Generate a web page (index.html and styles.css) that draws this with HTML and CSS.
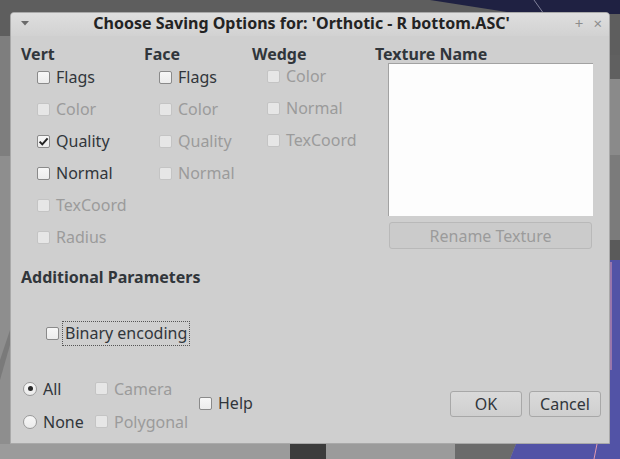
FILE: index.html
```html
<!DOCTYPE html>
<html lang="en">
<head>
    <meta charset="UTF-8">
    <meta name="viewport" content="width=device-width, initial-scale=1.0">
    <title>Choose Saving Options</title>
    <link rel="stylesheet" href="styles.css">
</head>
<body>
    <!-- desktop behind the dialog -->
    <svg class="desktop" width="620" height="459" viewBox="0 0 620 459">
        <rect x="0" y="0" width="620" height="459" fill="#8e8e8e"/>
        <polygon points="0,0 440,0 620,0 620,60 0,36" fill="#5e5e5e"/>
        <polygon points="430,0 620,0 620,14 520,14" fill="#1f2142"/>
        <line x1="534" y1="0" x2="544" y2="14" stroke="#9a9ab0" stroke-width="0.8"/>
        <rect x="0" y="36" width="10" height="120" fill="#7e7e7e"/>
        <polygon points="0,360 10,330 10,345 0,380" fill="#7a7a7a"/>
        <rect x="608" y="55" width="12" height="24" fill="#606060"/>
        <rect x="608" y="79" width="12" height="76" fill="#8a8a8a"/>
        <rect x="608" y="155" width="12" height="85" fill="#7b7b7b"/>
        <rect x="608" y="240" width="12" height="20" fill="#5a5a5a"/>
        <rect x="608" y="260" width="12" height="199" fill="#5253a6"/>
        <line x1="611" y1="262" x2="611" y2="370" stroke="#e29ab0" stroke-width="1"/>
        <rect x="0" y="444" width="620" height="15" fill="#9b9b9b"/>
        <rect x="290" y="444" width="36" height="15" fill="#3c3c3c"/>
        <polygon points="455,444 516,444 510,459 455,459" fill="#6b6b6b"/>
        <polygon points="516,444 620,444 620,459 510,459" fill="#5253a6"/>
        <line x1="597" y1="444" x2="594" y2="459" stroke="#e29ab0" stroke-width="1"/>
    </svg>

    <div class="dialog">
        <div class="titlebar">
            <svg class="menu-arrow" width="8" height="5" viewBox="0 0 8 5"><polygon points="0,0 8,0 4,4.5" fill="#6a6a6a"/></svg>
            <span class="title">Choose Saving Options for: 'Orthotic - R bottom.ASC'</span>
            <span class="win-btns"><span>+</span><span>×</span></span>
        </div>

        <div class="content">
            <div class="attrs">
                <div class="group vert">
                    <div class="group-title">Vert</div>
                    <div class="check"><span class="box"></span>Flags</div>
                    <div class="check disabled"><span class="box"></span>Color</div>
                    <div class="check"><span class="box checked"><svg width="11" height="11" viewBox="0 0 11 11"><path d="M1.6 5.6 L4.3 8.4 L9.6 2.4" fill="none" stroke="#222" stroke-width="2"/></svg></span>Quality</div>
                    <div class="check"><span class="box"></span>Normal</div>
                    <div class="check disabled"><span class="box"></span>TexCoord</div>
                    <div class="check disabled"><span class="box"></span>Radius</div>
                </div>
                <div class="group">
                    <div class="group-title">Face</div>
                    <div class="check"><span class="box"></span>Flags</div>
                    <div class="check disabled"><span class="box"></span>Color</div>
                    <div class="check disabled"><span class="box"></span>Quality</div>
                    <div class="check disabled"><span class="box"></span>Normal</div>
                </div>
                <div class="group wedge">
                    <div class="group-title">Wedge</div>
                    <div class="check disabled"><span class="box"></span>Color</div>
                    <div class="check disabled"><span class="box"></span>Normal</div>
                    <div class="check disabled"><span class="box"></span>TexCoord</div>
                </div>
                <div class="texture">
                    <div class="group-title">Texture Name</div>
                    <div class="texture-list"></div>
                    <button class="btn rename" disabled>Rename Texture</button>
                </div>
            </div>

            <div class="section-title">Additional Parameters</div>

            <div class="binary-row">
                <span class="box"></span>
                <span class="focus">Binary encoding</span>
            </div>

            <div class="bottom">
                <div class="col radios">
                    <div class="check"><span class="radio on"></span>All</div>
                    <div class="check"><span class="radio"></span>None</div>
                </div>
                <div class="col extras">
                    <div class="check disabled"><span class="box"></span>Camera</div>
                    <div class="check disabled"><span class="box"></span>Polygonal</div>
                </div>
                <div class="check help"><span class="box"></span>Help</div>
                <div class="buttons">
                    <button class="btn">OK</button>
                    <button class="btn">Cancel</button>
                </div>
            </div>
        </div>
    </div>
</body>
</html>
```

FILE: styles.css
```css
body {
    margin: 0;
    padding: 0;
    width: 620px;
    height: 459px;
    overflow: hidden;
    position: relative;
    font-family: 'Noto Sans', 'Open Sans', sans-serif;
    font-size: 16px;
    color: #31363b;
}
.desktop {
    position: absolute;
    top: 0;
    left: 0;
    z-index: 0;
}
.dialog {
    position: relative;
    z-index: 1;
    margin: 12px 0 0 10px;
    width: 600px;
    height: 432px;
    box-sizing: border-box;
    background-color: #cfcfcf;
    border: 1px solid #a9a9a9;
    border-radius: 4px 4px 0 0;
    display: flex;
    flex-direction: column;
}
.titlebar {
    height: 23px;
    box-sizing: border-box;
    padding-bottom: 3px;
    display: flex;
    align-items: center;
    position: relative;
    background: linear-gradient(#dedede, #d2d2d2);
    border-radius: 3px 3px 0 0;
}
.menu-arrow {
    position: absolute;
    left: 10px;
    top: 8px;
}
.title {
    flex: 1;
    text-align: center;
    font-weight: bold;
    font-size: 16px;
    line-height: 20px;
    color: #232323;
    padding-right: 17px;
}
.win-btns {
    position: absolute;
    right: 7px;
    top: 0;
    display: flex;
    gap: 10px;
    color: #8d8d8d;
    font-size: 15px;
    line-height: 20px;
}
.content {
    padding: 8px 0 0 10px;
    flex: 1;
    display: flex;
    flex-direction: column;
}
.attrs {
    display: grid;
    grid-template-columns: 123px 108px 123px 1fr;
    height: 209px;
}
.group-title {
    font-weight: bold;
    line-height: 20px;
    height: 20px;
}
.group .group-title {
    margin-bottom: -3px;
}
.wedge .group-title {
    margin-bottom: -4px;
}
.group .check {
    padding-left: 15px;
}
.vert .check {
    padding-left: 16px;
}
.check {
    display: flex;
    align-items: center;
    height: 32px;
    white-space: nowrap;
}
.check.disabled {
    color: #9b9b9b;
}
.box {
    width: 13px;
    height: 13px;
    box-sizing: border-box;
    border: 1px solid #8a8a8a;
    border-radius: 2px;
    background: linear-gradient(#f7f7f7, #ececec);
    margin-right: 6px;
    display: flex;
    align-items: center;
    justify-content: center;
    flex-shrink: 0;
}
.box svg {
    display: block;
}
.disabled .box {
    border-color: #c4c4c4;
    background: #e6e6e6;
}
.radio {
    width: 14px;
    height: 14px;
    box-sizing: border-box;
    border: 1px solid #9a9a9a;
    border-radius: 50%;
    background: linear-gradient(#f7f7f7, #ebebeb);
    margin-right: 6px;
    display: flex;
    align-items: center;
    justify-content: center;
}
.radio.on::after {
    content: "";
    width: 5px;
    height: 5px;
    border-radius: 50%;
    background-color: #2a2a2a;
}
.texture .group-title {
    margin-bottom: -1px;
}
.texture-list {
    margin-left: 13px;
    width: 205px;
    height: 153px;
    box-sizing: border-box;
    background-color: #fdfdfd;
    border-top: 1px solid #a2a2a2;
    border-left: 1px solid #a2a2a2;
}
.btn {
    font-family: inherit;
    font-size: 16px;
    color: #31363b;
    background: linear-gradient(#dadada, #cfcfcf);
    border: 1px solid #a8a8a8;
    border-radius: 3px;
    padding: 0;
    height: 26px;
    width: 72px;
}
.btn.rename {
    margin: 6px 0 0 14px;
    width: 203px;
    height: 27px;
    color: #9b9b9b;
    background: #cbcbcb;
    border-color: #b9b9b9;
}
.section-title {
    font-weight: bold;
    line-height: 20px;
    margin-top: 14px;
}
.binary-row {
    display: flex;
    align-items: center;
    margin: 34px 0 0 25px;
    height: 25px;
}
.binary-row .box {
    margin-right: 3px;
}
.focus {
    border: 1px dotted #555;
    padding: 0 2px;
    line-height: 23px;
    white-space: nowrap;
}
.bottom {
    display: flex;
    align-items: center;
    margin-top: 26px;
    padding-left: 2px;
    padding-right: 8px;
}
.col .check {
    height: 33px;
}
.radios {
    width: 72px;
}
.extras {
    width: 104px;
}
.help {
    margin-top: -4px;
}
.buttons {
    margin-left: auto;
    display: flex;
    gap: 7px;
    margin-top: -3px;
}
```
